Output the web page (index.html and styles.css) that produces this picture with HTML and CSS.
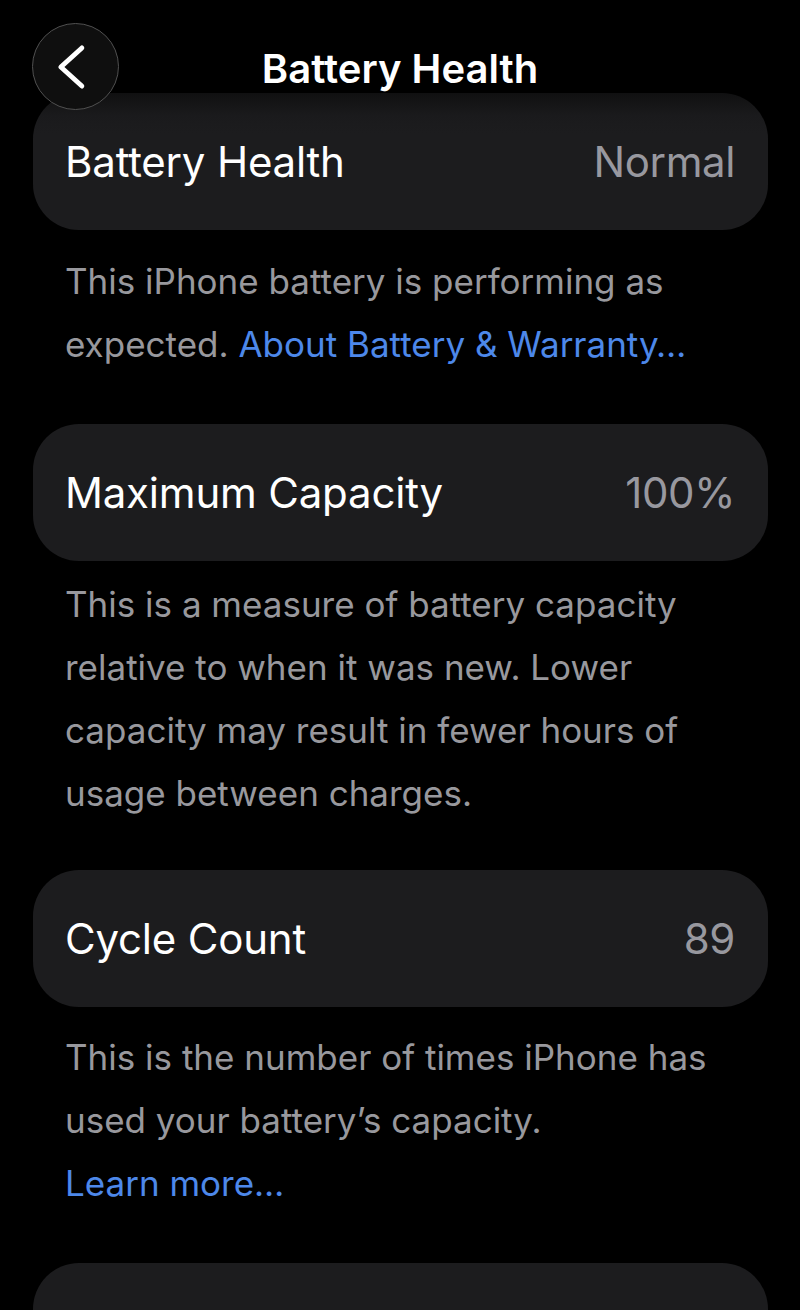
FILE: index.html
```html
<!DOCTYPE html>
<html lang="en">
<head>
<meta charset="utf-8">
<title>Battery Health</title>
<link rel="stylesheet" href="styles.css">
</head>
<body>
<header class="nav">
  <button class="back" aria-label="Back">
    <svg viewBox="0 0 87 87" width="87" height="87">
      <path d="M50 24.5 L28.5 44 L50 63.5" fill="none" stroke="#fff" stroke-width="5" stroke-linecap="round" stroke-linejoin="round"/>
    </svg>
  </button>
  <h1 class="title">Battery Health</h1>
</header>
<main class="content">
  <section class="group">
    <div class="cell cell-first">
      <span class="label">Battery Health</span>
      <span class="value">Normal</span>
    </div>
    <p class="footer f1">This iPhone battery is performing as expected. <a class="link" href="#">About Battery &amp; Warranty…</a></p>
  </section>
  <section class="group">
    <div class="cell">
      <span class="label">Maximum Capacity</span>
      <span class="value">100%</span>
    </div>
    <p class="footer f2">This is a measure of battery capacity relative to when it was new. Lower capacity may result in fewer hours of usage between charges.</p>
  </section>
  <section class="group">
    <div class="cell">
      <span class="label">Cycle Count</span>
      <span class="value">89</span>
    </div>
    <p class="footer f3">This is the number of times iPhone has used your battery’s capacity.<br><a class="link" href="#">Learn more…</a></p>
  </section>
  <section class="group">
    <div class="cell cell-last"></div>
  </section>
</main>
</body>
</html>
```
FILE: styles.css
```css
* { box-sizing: border-box; }
html, body {
  margin: 0;
  padding: 0;
  background: #000;
}
body {
  width: 800px;
  height: 1310px;
  overflow: hidden;
  position: relative;
  font-family: Inter, "Noto Sans", "Liberation Sans", sans-serif;
  color: #fff;
}
.nav {
  position: absolute;
  top: 0;
  left: 0;
  right: 0;
  height: 112px;
  z-index: 2;
}
.back {
  position: absolute;
  left: 32px;
  top: 23px;
  width: 87px;
  height: 87px;
  padding: 0;
  border-radius: 50%;
  border: 1.5px solid #505050;
  background: #0f0f0f;
  display: flex;
  align-items: center;
  justify-content: center;
}
.back svg { display: block; }
.title {
  margin: 0;
  position: absolute;
  left: 0;
  right: 0;
  top: 45px;
  text-align: center;
  font-size: 40px;
  line-height: 48px;
  font-weight: 600;
  letter-spacing: 0;
}
.content {
  padding: 93px 32px 0 33px;
  display: flex;
  flex-direction: column;
}
.group { display: flex; flex-direction: column; }
.cell {
  height: 137px;
  border-radius: 46px;
  background: #1c1c1e;
  display: flex;
  align-items: center;
  justify-content: space-between;
  padding: 0 33px 0 32px;
}
.cell-first {
  background: linear-gradient(#101011 0, #1a1a1c 22px, #1c1c1e 40px);
}
.label {
  font-size: 42px;
  letter-spacing: -0.2px;
  color: #fff;
}
.value {
  font-size: 42px;
  letter-spacing: -0.4px;
  color: #98989f;
}
.footer {
  margin: 0;
  padding: 20px 20px 48px 32px;
  font-size: 35px;
  line-height: 63px;
  letter-spacing: 0;
  color: #98989d;
}
.f2 { padding-top: 12px; padding-bottom: 45px; }
.f3 { padding-top: 19px; }
.link {
  color: #4d88ea;
  text-decoration: none;
}
```
